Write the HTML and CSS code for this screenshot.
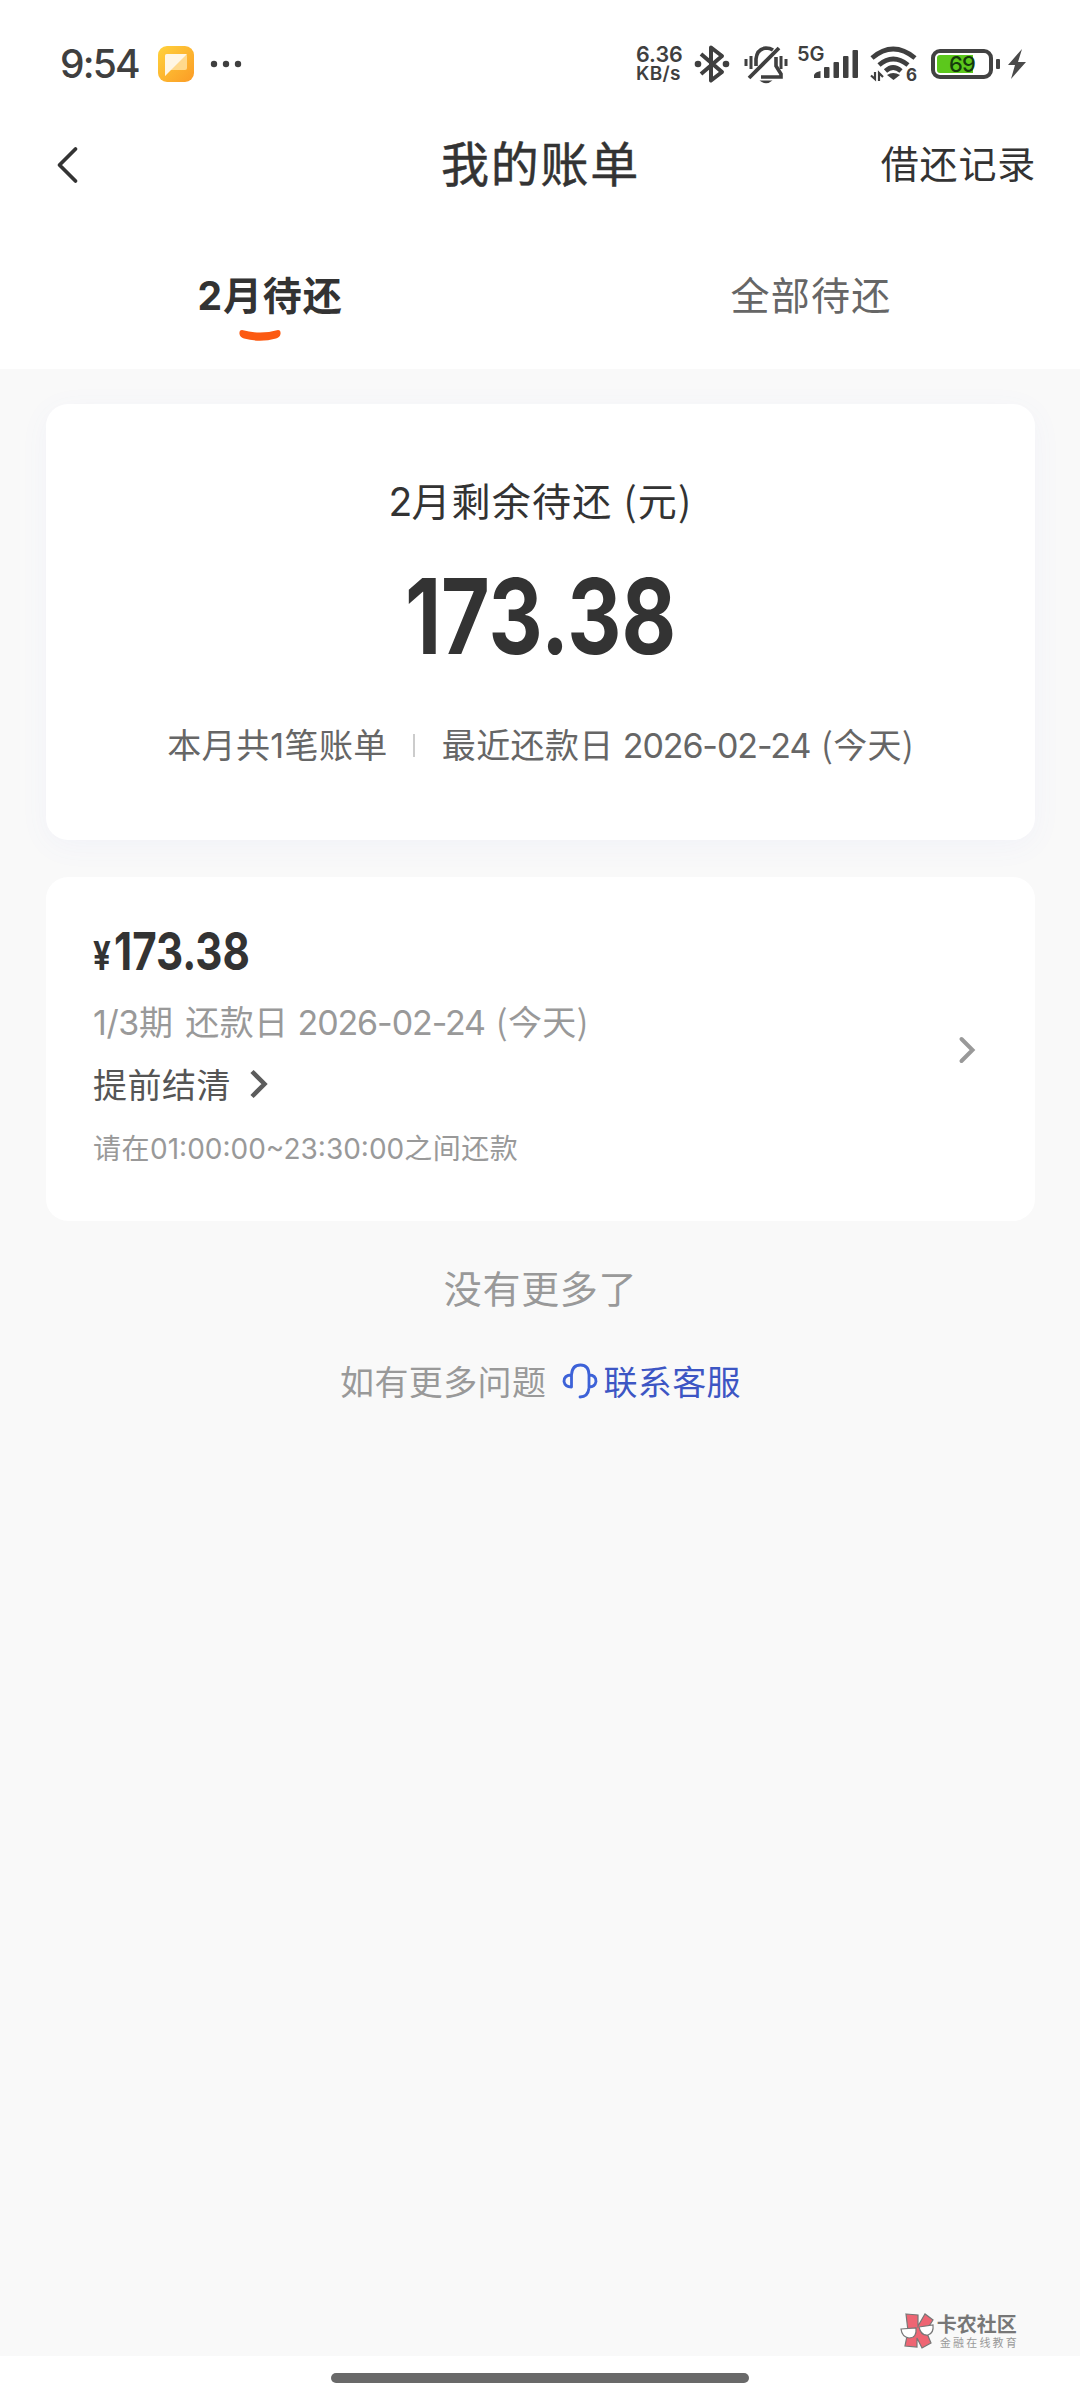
FILE: index.html
```html
<!DOCTYPE html>
<html lang="zh-CN">
<head>
<meta charset="utf-8">
<title>我的账单</title>
<link rel="stylesheet" href="styles.css">
</head>
<body>
<div class="screen">
  <header class="top">
    <div class="status">
      <div class="status-left">
        <span class="clock">9:54</span>
        <svg class="app-icon" width="36" height="36" viewBox="0 0 36 36">
          <defs><linearGradient id="amber" x1="0" y1="0" x2="1" y2="1"><stop offset="0" stop-color="#ffd23c"/><stop offset="1" stop-color="#fb9b25"/></linearGradient></defs>
          <rect width="36" height="36" rx="9" fill="url(#amber)"/>
          <path d="M9 8H27Q29 8 29 10V22Q29 24 27 24H12L7 30V10Q7 8 9 8Z" fill="#ffd98c"/>
          <path d="M9 8H29L7 30V10Q7 8 9 8Z" fill="#fff6e4"/>
        </svg>
        <svg width="32" height="8" viewBox="0 0 32 8" fill="#3f3f3f"><circle cx="4" cy="4" r="3.2"/><circle cx="16" cy="4" r="3.2"/><circle cx="28" cy="4" r="3.2"/></svg>
      </div>
      <div class="status-right">
        <div class="speed"><span class="speed-value">6.36</span><span class="speed-unit">KB/s</span></div>
        <svg class="bluetooth" width="36" height="40" viewBox="0 0 36 40" fill="none" stroke="#3f3f3f" stroke-width="4" stroke-linejoin="round">
          <path d="M7 10L28 28L17 36.500V3.500L28 12L7 30"/><circle cx="4" cy="20" r="3.300" fill="#3f3f3f" stroke="none"/><circle cx="32" cy="20" r="3.300" fill="#3f3f3f" stroke="none"/>
        </svg>
        <svg class="bell" width="44" height="40" viewBox="0 0 44 40" fill="none" stroke="#3f3f3f" stroke-width="3">
          <path d="M2 15V22M7 12V25M37 12V25M42 15V22"/>
          <path d="M12 22V15Q13 5 22 4Q26 4 29 6M32 13V22L37 30V33H17" stroke-width="3.600"/>
          <path d="M5 34L35 4" stroke-width="3.800"/>
          <path d="M15.500 36.500H28.500Q22 42 15.500 36.500Z" fill="#3f3f3f" stroke="none"/>
        </svg>
        <div class="cell"><span class="cell-type">5G</span>
          <svg width="44" height="30" viewBox="0 0 44 30" fill="#3f3f3f"><path d="M0 29V26Q1 23 6.500 22V29Z"/><rect x="10" y="18" width="5.500" height="11" rx="1"/><rect x="19.500" y="13" width="5.500" height="16" rx="1"/><rect x="29" y="7" width="5.500" height="22" rx="1"/><rect x="38.500" y="1" width="5.500" height="28" rx="1"/></svg>
        </div>
        <div class="wifi">
          <svg width="47" height="36" viewBox="0 0 47 36" fill="none" stroke="#3f3f3f">
            <path d="M2 12Q23 -6 45 12M9 19Q23 7 38 19M15.500 25Q23 18 31 25" stroke-width="4.800"/>
            <path d="M17 29Q23 25 30 29L23.500 34Z" fill="#3f3f3f" stroke="none"/>
            <path d="M5 26V33L1 29.500M9 35V27L13 31" stroke-width="2.200"/>
          </svg>
          <span class="wifi-gen">6</span>
        </div>
        <div class="battery"><div class="battery-fill"></div><span class="battery-text">69</span></div>
        <div class="battery-nub"></div>
        <svg class="bolt" width="20" height="30" viewBox="0 0 20 30" fill="#4a4a4a"><path d="M15 0L1 16H8L4 30L19 13H11Z"/></svg>
      </div>
    </div>
    <div class="nav">
      <svg class="back" width="24" height="40" viewBox="0 0 24 40" fill="none" stroke="#333" stroke-width="3.800" stroke-linecap="round" stroke-linejoin="round"><path d="M20.500 4L4.500 20L20.500 36"/></svg>
      <h1 class="nav-title">我的账单</h1>
      <a class="nav-link">借还记录</a>
    </div>
    <div class="tabs">
      <div class="tab tab-active"><span class="tab-text"><span class="tab-digit">2</span>月待还</span>
        <svg class="smile" width="42" height="14" viewBox="0 0 42 14" fill="#fc5a12"><path d="M3 1Q21 6 39 1Q42 1 41.500 5Q41 8 37 9.500Q21 14 5 9.500Q1 8 .500 5Q0 1 3 1Z"/></svg>
      </div>
      <div class="tab"><span class="tab-text">全部待还</span></div>
    </div>
  </header>
  <main class="content">
    <section class="card summary">
      <div class="summary-title"><span class="n n-title">2</span>月剩余待还<span class="paren-open">(</span>元)</div>
      <div class="summary-amount"><span class="din">173.38</span></div>
      <div class="summary-meta">
        <span>本月共<span class="n n-one">1</span>笔账单</span>
        <i class="divider"></i>
        <span>最近还款日<span class="n date">2026-02-24</span><span class="today">(今天)</span></span>
      </div>
    </section>
    <section class="card bill">
      <div class="bill-info">
        <div class="bill-amount"><span class="yen">¥</span><span class="din">173.38</span></div>
        <div class="bill-date"><span class="n term">1/3</span>期<span class="due">还款日</span><span class="n date">2026-02-24</span><span class="today">(今天)</span></div>
        <div class="bill-settle">提前结清<svg width="20" height="30" viewBox="0 0 20 30" fill="none" stroke="#5c5c5c" stroke-width="4.500"><path d="M3 2.500L15.500 15L3 27.500"/></svg></div>
        <div class="bill-hours">请在<span class="n hours">01:00:00~23:30:00</span>之间还款</div>
      </div>
      <svg class="bill-arrow" width="20" height="30" viewBox="0 0 20 30" fill="none" stroke="#999" stroke-width="4" stroke-linecap="round"><path d="M4.500 4L15.500 15L4.500 26"/></svg>
    </section>
    <p class="no-more">没有更多了</p>
    <div class="help">如有更多问题
      <svg class="headset" width="36" height="36" viewBox="0 0 36 36" fill="none" stroke="#3d62d8" stroke-width="2.800" stroke-linecap="round"><path d="M9.500 24V12Q10 2 18.500 2Q27 2 27 12V25Q26 34 18 34M9.500 12Q2 12 2 18.500Q3 24 9.500 24M27 12Q34 12 34 18.500Q33 24 27 24"/></svg>
      <a class="help-link">联系客服</a>
    </div>
    <div class="brand">
      <svg width="36" height="36" viewBox="0 0 36 36" stroke="#777" stroke-width="1.200">
        <path d="M6 1L18 2V13L25 1L33 7L26 18L31 30L22 35L17 25V34L5 33L8 18Z" fill="#ee6573"/>
        <path d="M1 16L16 15Q17 25 9 25Q2 24 1 16ZM19 14L33 12Q34 20 28 22Q21 23 19 14Z" fill="#fff"/>
      </svg>
      <div class="brand-text"><span class="brand-name">卡农社区</span><span class="brand-sub">金融在线教育</span></div>
    </div>
  </main>
  <footer class="gesture"><div class="gesture-bar"></div></footer>
</div>
</body>
</html>
```
FILE: styles.css
```css
* { box-sizing: border-box; }
body { margin: 0; background: #fff; color: #333; font-family: "Noto Sans CJK SC", sans-serif; }
.screen { width: 1080px; height: 2400px; display: flex; flex-direction: column; }
.top { height: 369px; background: #fff; }
svg { display: block; flex: none; }

.status { height: 128px; padding: 0 53px 0 60px; display: flex; justify-content: space-between; color: #3f3f3f; font-family: Inter, sans-serif; }
.status-left, .status-right { display: flex; height: 128px; align-items: center; }
.clock { width: 98px; font-size: 39px; font-weight: 500; letter-spacing: -1.8px; line-height: 48px; }
.app-icon { margin-right: 16px; }
.status-right { width: 391px; }
.speed { width: 58px; display: flex; flex-direction: column; font-weight: 600; white-space: nowrap; }
.speed-value { font-size: 21.5px; line-height: 19px; letter-spacing: 0; }
.speed-unit { font-size: 19px; line-height: 19px; letter-spacing: 0.3px; }
.bluetooth { margin-right: 14px; }
.bell { margin-right: 8px; }
.cell { position: relative; width: 74px; padding-left: 18px; }
.cell-type { position: absolute; left: 1px; top: -5px; font-size: 20px; font-weight: 600; line-height: 20px; }
.wifi { position: relative; width: 61px; }
.wifi-gen { position: absolute; left: 36px; top: 21px; font-size: 17px; font-weight: 700; line-height: 17px; }
.battery { position: relative; width: 62px; height: 30px; border: 4px solid #424242; border-radius: 9px; padding: 2px; }
.battery-fill { width: 36px; height: 18px; background: #5cc81c; border-radius: 3px 0 0 3px; }
.battery-text { position: absolute; left: 14px; top: 1px; font-size: 22px; line-height: 20px; font-weight: 500; color: #153a0c; letter-spacing: -0.8px; }
.battery-nub { width: 4px; height: 10px; margin: 0 7px 0 3px; background: #424242; border-radius: 1px; }

.nav { height: 74px; padding: 0 44px 0 55px; display: grid; grid-template-columns: 1fr auto 1fr; align-items: center; }
.nav-title { margin: 0 10px 7px 0; font-size: 48px; font-weight: 400; line-height: 67px; letter-spacing: 1.7px; -webkit-text-stroke: 0.5px #333; }
.nav-link { justify-self: end; margin-bottom: 6px; font-size: 38px; line-height: 56px; letter-spacing: 0.8px; }
.tabs { height: 167px; display: grid; grid-template-columns: 1fr 1fr; }
.tab { display: flex; flex-direction: column; align-items: center; padding-top: 63px; font-size: 39px; color: #666; }
.tab-text { line-height: 56px; letter-spacing: 1.2px; margin-left: 2px; }
.tab-active { color: #333; font-weight: 700; }
.tab-active .tab-text { margin-left: 0; letter-spacing: 0.9px; }
.tab-digit { font-family: Inter, sans-serif; }
.smile { margin-top: 5px; margin-left: -20px; }

.content { flex: 1; background: #f9f9f9; padding: 35px 45px 0 46px; display: flex; flex-direction: column; }
.card { background: #fff; border-radius: 22px; }
.n { font-family: Inter, sans-serif; }
.n-title { letter-spacing: -1px; }
.din { font-family: Inter, sans-serif; font-weight: 700; display: inline-block; transform: scaleX(0.8); }
.summary { height: 436px; padding-top: 67px; display: flex; flex-direction: column; align-items: center; box-shadow: 0 6px 30px rgba(90, 110, 240, 0.05); }
.summary-title { font-size: 39px; line-height: 56px; letter-spacing: 1.2px; }
.paren-open { margin-left: 11px; }
.summary-amount { margin-top: 18px; font-size: 105px; line-height: 120px; }
.summary-meta { margin-top: 44px; display: flex; align-items: center; font-size: 34px; line-height: 48px; color: #666; letter-spacing: 0.4px; white-space: nowrap; }
.divider { width: 2px; height: 23px; margin: 0 27px 0 25px; background: #ccc; }
.date { margin-left: 9px; letter-spacing: -1.1px; }
.today { margin-left: 11px; }

.bill { height: 344px; margin-top: 37px; padding: 42px 58px 0 47px; display: flex; justify-content: space-between; }
.bill-amount { display: flex; align-items: baseline; height: 66px; line-height: 66px; font-size: 52px; }
.bill-amount .din { transform-origin: left; transform: scaleX(0.81); }
.yen { width: 21px; font: 700 39px Inter, sans-serif; transform: scaleX(0.8); transform-origin: left; }
.bill-date { margin-top: 12px; font-size: 34px; line-height: 48px; color: #999; white-space: nowrap; letter-spacing: 0.4px; }
.term { letter-spacing: -0.4px; }
.due { margin-left: 12px; }
.bill-settle { margin-top: 13px; display: flex; align-items: center; gap: 18px; font-size: 34px; line-height: 48px; color: #555; letter-spacing: 0.5px; }
.bill-hours { margin-top: 18px; font-size: 28px; line-height: 42px; color: #999; white-space: nowrap; letter-spacing: 0.5px; }
.hours { letter-spacing: 0; }
.bill-arrow { margin-top: 116px; }

.no-more { margin: 38px 0 0; text-align: center; font-size: 38px; line-height: 56px; color: #999; letter-spacing: 0.7px; }
.help { margin-top: 42px; display: flex; justify-content: center; align-items: center; font-size: 34px; line-height: 48px; color: #999; letter-spacing: 0.4px; }
.headset { margin: 0 5px 0 16px; }
.help-link { color: #3d56c4; }
.brand { margin: auto 16px 7px 0; align-self: flex-end; display: flex; align-items: center; gap: 1px; color: #777; }
.brand-text { display: flex; flex-direction: column; }
.brand-name { font-size: 20px; font-weight: 700; line-height: 22px; }
.brand-sub { padding-left: 3px; font-size: 11px; line-height: 14px; letter-spacing: 2.2px; color: #999; }

.gesture { height: 44px; background: #fff; padding-top: 17px; }
.gesture-bar { width: 418px; height: 10px; margin: 0 auto; border-radius: 5px; background: #696969; }
```
